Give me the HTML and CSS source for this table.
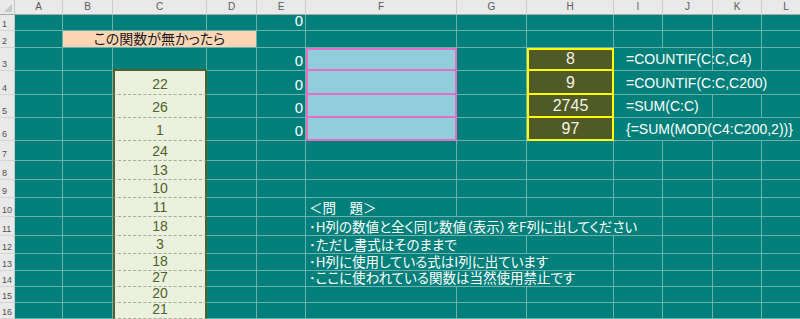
FILE: index.html
```html
<!DOCTYPE html>
<html lang="ja">
<head>
<meta charset="utf-8">
<title>Sheet</title>
<link rel="stylesheet" href="styles.css">
</head>
<body>
<div class="sheet">
  <!-- column headers -->
  <div class="corner"><span class="tri"></span></div>
  <div class="ch">A</div><div class="ch">B</div><div class="ch">C</div><div class="ch">D</div><div class="ch">E</div><div class="ch">F</div><div class="ch">G</div><div class="ch">H</div><div class="ch">I</div><div class="ch">J</div><div class="ch">K</div><div class="ch">L</div>

  <!-- row 1 -->
  <div class="rh">1</div>
  <div class="c"></div><div class="c"></div><div class="c"></div><div class="c"></div><div class="c num">0</div><div class="c"></div><div class="c"></div><div class="c"></div><div class="c"></div><div class="c"></div><div class="c"></div><div class="c"></div>

  <!-- row 2 -->
  <div class="rh">2</div>
  <div class="c"></div><div class="c title">この関数が無かったら</div><div class="c"></div><div class="c"></div><div class="c"></div><div class="c"></div><div class="c"></div><div class="c"></div><div class="c"></div><div class="c"></div>

  <!-- row 3 -->
  <div class="rh">3</div>
  <div class="c"></div><div class="c"></div><div class="c ctop"></div><div class="c"></div><div class="c num">0</div><div class="c f first"></div><div class="c"></div><div class="c h first">8</div><div class="c fx span2">=COUNTIF(C:C,C4)</div><div class="c"></div><div class="c"></div>

  <!-- row 4 -->
  <div class="rh">4</div>
  <div class="c"></div><div class="c"></div><div class="c cv tall">22</div><div class="c"></div><div class="c num">0</div><div class="c f"></div><div class="c"></div><div class="c h">9</div><div class="c fx span4">=COUNTIF(C:C,C200)</div>

  <!-- row 5 -->
  <div class="rh">5</div>
  <div class="c"></div><div class="c"></div><div class="c cv tall">26</div><div class="c"></div><div class="c num">0</div><div class="c f"></div><div class="c"></div><div class="c h">2745</div><div class="c fx span2">=SUM(C:C)</div><div class="c"></div><div class="c"></div>

  <!-- row 6 -->
  <div class="rh">6</div>
  <div class="c"></div><div class="c"></div><div class="c cv tall">1</div><div class="c"></div><div class="c num">0</div><div class="c f"></div><div class="c"></div><div class="c h">97</div><div class="c fx span4">{=SUM(MOD(C4:C200,2))}</div>

  <!-- row 7 -->
  <div class="rh">7</div>
  <div class="c"></div><div class="c"></div><div class="c cv">24</div><div class="c"></div><div class="c"></div><div class="c"></div><div class="c"></div><div class="c"></div><div class="c"></div><div class="c"></div><div class="c"></div><div class="c"></div>

  <!-- row 8 -->
  <div class="rh">8</div>
  <div class="c"></div><div class="c"></div><div class="c cv">13</div><div class="c"></div><div class="c"></div><div class="c"></div><div class="c"></div><div class="c"></div><div class="c"></div><div class="c"></div><div class="c"></div><div class="c"></div>

  <!-- row 9 -->
  <div class="rh">9</div>
  <div class="c"></div><div class="c"></div><div class="c cv">10</div><div class="c"></div><div class="c"></div><div class="c"></div><div class="c"></div><div class="c"></div><div class="c"></div><div class="c"></div><div class="c"></div><div class="c"></div>

  <!-- row 10 -->
  <div class="rh">10</div>
  <div class="c"></div><div class="c"></div><div class="c cv">11</div><div class="c"></div><div class="c"></div><div class="c note">＜問　題＞</div><div class="c"></div><div class="c"></div><div class="c"></div><div class="c"></div><div class="c"></div><div class="c"></div>

  <!-- row 11 -->
  <div class="rh">11</div>
  <div class="c"></div><div class="c"></div><div class="c cv">18</div><div class="c"></div><div class="c"></div><div class="c note span4">･H列の数値と全く同じ数値（表示）をF列に出してください</div><div class="c"></div><div class="c"></div><div class="c"></div>

  <!-- row 12 -->
  <div class="rh">12</div>
  <div class="c"></div><div class="c"></div><div class="c cv">3</div><div class="c"></div><div class="c"></div><div class="c note span2">･ただし書式はそのままで</div><div class="c"></div><div class="c"></div><div class="c"></div><div class="c"></div><div class="c"></div>

  <!-- row 13 -->
  <div class="rh">13</div>
  <div class="c"></div><div class="c"></div><div class="c cv">18</div><div class="c"></div><div class="c"></div><div class="c note span3">･H列に使用している式はI列に出ています</div><div class="c"></div><div class="c"></div><div class="c"></div><div class="c"></div>

  <!-- row 14 -->
  <div class="rh">14</div>
  <div class="c"></div><div class="c"></div><div class="c cv">27</div><div class="c"></div><div class="c"></div><div class="c note span3">･ここに使われている関数は当然使用禁止です</div><div class="c"></div><div class="c"></div><div class="c"></div><div class="c"></div>

  <!-- row 15 -->
  <div class="rh">15</div>
  <div class="c"></div><div class="c"></div><div class="c cv">20</div><div class="c"></div><div class="c"></div><div class="c"></div><div class="c"></div><div class="c"></div><div class="c"></div><div class="c"></div><div class="c"></div><div class="c"></div>

  <!-- row 16 -->
  <div class="rh">16</div>
  <div class="c"></div><div class="c"></div><div class="c cv">21</div><div class="c"></div><div class="c"></div><div class="c"></div><div class="c"></div><div class="c"></div><div class="c"></div><div class="c"></div><div class="c"></div><div class="c"></div>
</div>
</body>
</html>
```

FILE: styles.css
```css
html, body {
  margin: 0;
  padding: 0;
  overflow: hidden;
  background: #ffffff;
}

.sheet {
  display: grid;
  grid-template-columns: 15px 48px 50px 94px 50px 49px 151px 70px 87px 49px 50px 49px 49px;
  grid-template-rows: 15px 16px 17px 23px 24px 23px 23px 20px 19px 18px 19px 19px 18px 17px 16px 16px 16px;
  width: 811px;
  background: #017f7b;
  font-family: "Liberation Sans", "Noto Sans CJK JP", sans-serif;
  --grid: #6eb0ad;
}

.corner {
  background: #e9e9e9;
  border-right: 1px solid #c8c8c8;
  border-bottom: 1px solid #a9a9a9;
  box-sizing: border-box;
  display: flex;
  align-items: flex-end;
  justify-content: flex-end;
  padding: 0 2px 2px 0;
}
.tri {
  width: 0;
  height: 0;
  border-left: 8px solid transparent;
  border-bottom: 8px solid #c9c9c9;
}

.ch {
  background: #e9e9e9;
  border-right: 1px solid #cdcdcd;
  border-bottom: 1px solid #a9a9a9;
  box-sizing: border-box;
  color: #5a5a5a;
  font-size: 10px;
  line-height: 14px;
  text-align: center;
}

.rh {
  background: #e9e9e9;
  border-right: 1px solid #c8c8c8;
  border-bottom: 1px solid #d4d4d4;
  box-sizing: border-box;
  color: #505050;
  font-size: 9px;
  display: flex;
  align-items: flex-end;
  padding: 0 0 1px 2px;
}

.c {
  box-sizing: border-box;
  border-right: 1px solid var(--grid);
  border-bottom: 1px solid var(--grid);
  white-space: nowrap;
  min-width: 0;
  display: flex;
  align-items: flex-end;
  padding-bottom: 1px;
}

.span2 { grid-column: span 2; }
.span3 { grid-column: span 3; }
.span4 { grid-column: span 4; }

.num {
  justify-content: flex-end;
  color: #ffffff;
  font-size: 15px;
  padding-right: 2px;
}

.title {
  grid-column: span 3;
  background: #fcd5b4;
  justify-content: center;
  color: #1a1a1a;
  font-family: "Noto Sans CJK JP", sans-serif;
  font-feature-settings: "palt";
  font-size: 14px;
  line-height: 16px;
}

.ctop {
  border-bottom: 2px solid #4f6228;
}

.cv {
  background: #ebf1de;
  border-left: 2px solid #4f6228;
  border-right: 2px solid #4f6228;
  border-bottom: 1px dashed #a8aa98;
  justify-content: center;
  color: #4f6228;
  font-size: 14px;
  line-height: 16px;
}
.cv.tall {
  padding-bottom: 2px;
}

.f {
  background: #92cddc;
  border-left: 2px solid #e36fc7;
  border-right: 2px solid #e36fc7;
  border-bottom: 2px solid #e36fc7;
}
.f.first {
  border-top: 2px solid #e36fc7;
}

.h {
  background: #4f5a27;
  border-left: 2px solid #ffff00;
  border-right: 2px solid #ffff00;
  border-bottom: 2px solid #ffff00;
  justify-content: center;
  color: #f4f4e4;
  font-size: 16px;
  line-height: 19px;
}
.h.first {
  border-top: 2px solid #ffff00;
}

.fx {
  color: #ffffff;
  font-size: 14px;
  line-height: 17px;
  padding-left: 12px;
  padding-bottom: 2px;
}

.note {
  color: #ffffff;
  font-family: "Noto Sans CJK JP", sans-serif;
  font-feature-settings: "palt";
  font-size: 13.5px;
  line-height: 16px;
  padding-left: 3px;
}
```
